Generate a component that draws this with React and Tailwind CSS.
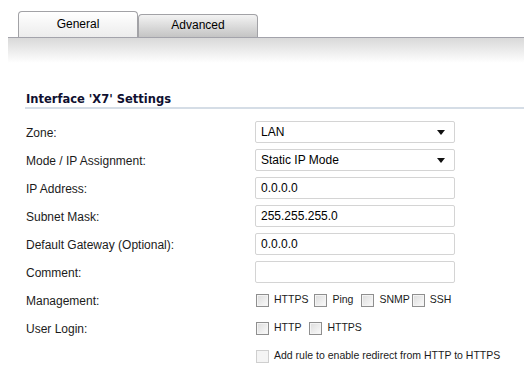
import React from 'react'

const Box = ({ disabled }) => (
  <span
    className={
      'inline-block w-[13px] h-[13px] shrink-0 border ' +
      (disabled
        ? 'border-[#cfcfcf] bg-[#f4f4f4]'
        : 'border-[#8f8f8f] bg-gradient-to-br from-[#dcdcdc] to-[#fbfbfb] shadow-[inset_0_0_0_1px_#f4f4f4]')
    }
  />
)

const Check = ({ label, gap = 'mr-[7px]' }) => (
  <span className={'flex items-center ' + gap}>
    <Box />
    <span className="ml-[5px]">{label}</span>
  </span>
)

const Field = ({ value, select }) => (
  <div className="flex items-center justify-between w-[200px] h-[22px] border border-[#d4d4d4] rounded-[2px] bg-white pl-[5px] pr-[9px] text-[12px] text-black">
    <span>{value}</span>
    {select && (
      <svg width="8" height="5" viewBox="0 0 8 5">
        <path d="M0 0h8L4 5z" fill="#111" />
      </svg>
    )}
  </div>
)

const rows = [
  ['Zone:', <Field value="LAN" select />],
  ['Mode / IP Assignment:', <Field value="Static IP Mode" select />],
  ['IP Address:', <Field value="0.0.0.0" />],
  ['Subnet Mask:', <Field value="255.255.255.0" />],
  ['Default Gateway (Optional):', <Field value="0.0.0.0" />],
  ['Comment:', <Field value="" />],
]

export default function App() {
  return (
    <div className="w-[524px] h-[373px] bg-white overflow-hidden font-['Liberation_Sans',Arial,sans-serif] text-[#1b1b1b]">
      <div className="flex items-end pl-[18px] pt-[11px] h-[37px]">
        <div className="w-[120px] h-[26px] border border-b-0 border-[#a2a2a6] rounded-t-[4px] bg-gradient-to-b from-white to-[#ececec] flex items-center justify-center text-[12px] text-black pb-[2px]">
          General
        </div>
        <div className="w-[120px] h-[23px] border border-b-0 border-[#a2a2a6] rounded-t-[4px] bg-gradient-to-b from-[#f3f3f3] to-[#c4c4c4] flex items-center justify-center text-[12px] text-black pb-[2px]">
          Advanced
        </div>
      </div>
      <div className="ml-[8px] h-[26px] border-t border-[#a3a3ab] bg-gradient-to-b from-[#d9d9d9] to-white" />

      <div className="pl-[25px] pt-[30px]">
        <div className="font-['DejaVu_Sans',Verdana,sans-serif] font-bold text-[11.5px] text-[#101030] pl-[1px] pb-[2px] border-b-2 border-[#d5dde6] leading-[12px]">
          Interface 'X7' Settings
        </div>

        <div className="pt-[9px] pl-[1px] text-[12px]">
          {rows.map(([label, field]) => (
            <div key={label} className="flex items-center h-[28px]">
              <span className="w-[229px] pt-[2px]">{label}</span>
              {field}
            </div>
          ))}
          <div className="flex items-center h-[28px]">
            <span className="w-[229px] pt-[2px]">Management:</span>
            <div className="flex items-center text-[10.5px] pl-[1px]">
              <Check label="HTTPS" gap="mr-[6px]" />
              <Check label="Ping" gap="mr-[8px]" />
              <Check label="SNMP" gap="mr-[2px]" />
              <Check label="SSH" />
            </div>
          </div>
          <div className="flex items-center h-[28px]">
            <span className="w-[229px] pt-[2px]">User Login:</span>
            <div className="flex items-center text-[10.5px] pl-[1px]">
              <Check label="HTTP" gap="mr-[8px]" />
              <Check label="HTTPS" />
            </div>
          </div>
          <div className="flex items-center h-[28px]">
            <span className="w-[229px]" />
            <span className="flex items-center text-[10.5px] pl-[1px]">
              <Box disabled />
              <span className="ml-[5px]">Add rule to enable redirect from HTTP to HTTPS</span>
            </span>
          </div>
        </div>
      </div>
    </div>
  )
}
